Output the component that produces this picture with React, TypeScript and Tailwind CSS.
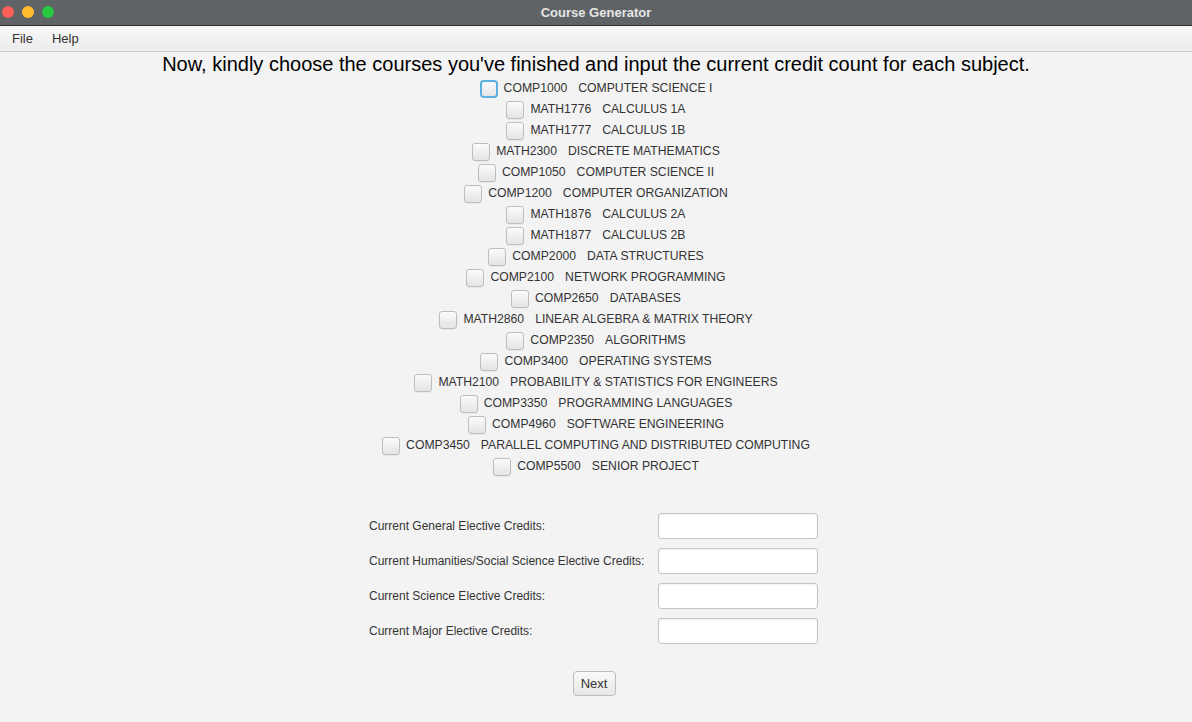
import React from 'react';

const courses: [string, string][] = [
  ['COMP1000', 'COMPUTER SCIENCE I'],
  ['MATH1776', 'CALCULUS 1A'],
  ['MATH1777', 'CALCULUS 1B'],
  ['MATH2300', 'DISCRETE MATHEMATICS'],
  ['COMP1050', 'COMPUTER SCIENCE II'],
  ['COMP1200', 'COMPUTER ORGANIZATION'],
  ['MATH1876', 'CALCULUS 2A'],
  ['MATH1877', 'CALCULUS 2B'],
  ['COMP2000', 'DATA STRUCTURES'],
  ['COMP2100', 'NETWORK PROGRAMMING'],
  ['COMP2650', 'DATABASES'],
  ['MATH2860', 'LINEAR ALGEBRA & MATRIX THEORY'],
  ['COMP2350', 'ALGORITHMS'],
  ['COMP3400', 'OPERATING SYSTEMS'],
  ['MATH2100', 'PROBABILITY & STATISTICS FOR ENGINEERS'],
  ['COMP3350', 'PROGRAMMING LANGUAGES'],
  ['COMP4960', 'SOFTWARE ENGINEERING'],
  ['COMP3450', 'PARALLEL COMPUTING AND DISTRIBUTED COMPUTING'],
  ['COMP5500', 'SENIOR PROJECT'],
];

const credits = [
  'Current General Elective Credits:',
  'Current Humanities/Social Science Elective Credits:',
  'Current Science Elective Credits:',
  'Current Major Elective Credits:',
];

const CourseRow: React.FC<{ code: string; title: string; focused?: boolean }> = ({ code, title, focused }) => (
  <label className="flex h-[21px] items-center text-[12.2px] text-[#333333]">
    {/* checkbox */}
    <span
      className={
        focused
          ? 'h-[18px] w-[18px] rounded-[4px] border-2 border-[#5ab0e0] bg-gradient-to-b from-[#fbfbfb] to-[#e4e4e4]'
          : 'h-[18px] w-[18px] rounded-[3px] border border-[#bdbdbd] bg-gradient-to-b from-[#fbfbfb] to-[#e4e4e4] shadow-[0_1px_0_rgba(0,0,0,0.04)]'
      }
    />
    <span className="ml-[6px]">{code}</span>
    <span className="ml-[11px]">{title}</span>
  </label>
);

const App: React.FC = () => {
  return (
    <div className="flex h-[722px] w-[1192px] flex-col overflow-hidden bg-[#f3f3f3] font-['Liberation_Sans',Arial,sans-serif]">
      {/* Title bar */}
      <div className="relative flex h-[26px] shrink-0 items-center justify-center border-b border-[#2e2e2e] bg-[#606366]">
        <div className="absolute left-[2px] top-[6px] flex gap-[8px]">
          <span className="h-[12px] w-[12px] rounded-full bg-[#fe5f57]" />
          <span className="h-[12px] w-[12px] rounded-full bg-[#febc2e]" />
          <span className="h-[12px] w-[12px] rounded-full bg-[#28c840]" />
        </div>
        <span className="text-[13px] font-bold text-[#e6e6e6]">Course Generator</span>
      </div>

      {/* Menu bar */}
      <div className="flex h-[26px] shrink-0 items-center gap-[19px] border-b border-[#c9c9c9] bg-gradient-to-b from-[#f8f8f8] to-[#ececec] px-[12px] text-[13px] text-[#333333]">
        <span>File</span>
        <span>Help</span>
      </div>

      {/* Content */}
      <div className="flex flex-col items-center">
        <h1 className="h-[26px] text-[20px] leading-[25px] text-black">
          Now, kindly choose the courses you've finished and input the current credit count for each subject.
        </h1>

        <div className="flex flex-col items-center">
          {courses.map(([code, title], i) => (
            <CourseRow key={code} code={code} title={title} focused={i === 0} />
          ))}
        </div>

        <div className="mr-[5px] mt-[36px] grid grid-cols-[289px_160px] gap-y-[9px]">
          {credits.map((c) => (
            <React.Fragment key={c}>
              <span className="flex h-[26px] items-center text-[12px] text-[#333333]">{c}</span>
              <input
                className="h-[26px] w-[160px] rounded-[3px] border border-[#c4c4c4] bg-white shadow-[inset_0_1px_2px_rgba(0,0,0,0.06)] outline-none"
                type="text"
              />
            </React.Fragment>
          ))}
        </div>

        <button className="mr-[4px] mt-[27px] h-[25px] w-[43px] rounded-[4px] border border-[#bdbdbd] bg-gradient-to-b from-[#fafafa] to-[#e6e6e6] text-[13px] text-[#333333]">
          Next
        </button>
      </div>
    </div>
  );
};

export default App;
